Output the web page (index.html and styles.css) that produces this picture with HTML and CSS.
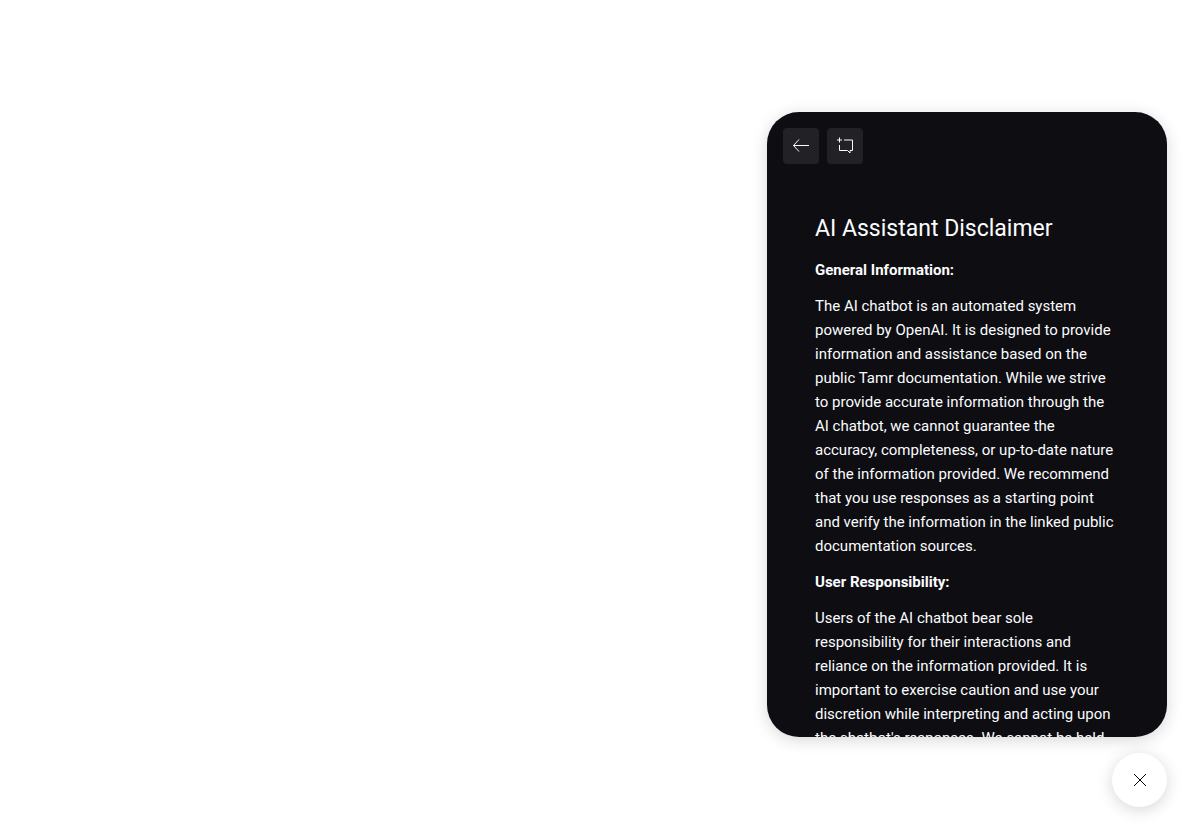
FILE: index.html
```html
<!DOCTYPE html>
<html lang="en">
<head>
<meta charset="utf-8">
<meta name="viewport" content="width=device-width, initial-scale=1">
<title>AI Assistant</title>
<link rel="stylesheet" href="styles.css">
</head>
<body class="page">
<section class="panel" aria-label="AI Assistant">
  <header class="toolbar">
    <button class="tool" type="button" aria-label="Back">
      <svg width="24" height="24" viewBox="0 0 24 24" fill="none" stroke="currentColor" aria-hidden="true"><path d="M4.500 11.500H20M10 5.500L4.500 11.500L10 17.500"/></svg>
    </button>
    <button class="tool" type="button" aria-label="New chat">
      <svg width="24" height="24" viewBox="0 0 24 24" fill="none" stroke="currentColor" aria-hidden="true"><path d="M6.500 3.500V8.500M4 6H9M11 6H19.500V16.500H17V19L14.500 16.500H6.500V11"/></svg>
    </button>
  </header>
  <article class="content">
    <h1 class="title">AI Assistant Disclaimer</h1>
    <h2 class="subtitle">General Information:</h2>
    <p class="text">The AI chatbot is an automated system<br>powered by OpenAI. It is designed to provide<br>information and assistance based on the<br>public Tamr documentation. While we strive<br>to provide accurate information through the<br>AI chatbot, we cannot guarantee the<br>accuracy, completeness, or up-to-date nature<br>of the information provided. We recommend<br>that you use responses as a starting point<br>and verify the information in the linked public<br>documentation sources.</p>
    <h2 class="subtitle">User Responsibility:</h2>
    <p class="text">Users of the AI chatbot bear sole<br>responsibility for their interactions and<br>reliance on the information provided. It is<br>important to exercise caution and use your<br>discretion while interpreting and acting upon<br>the chatbot's responses. We cannot be held</p>
  </article>
</section>
<button class="close" type="button" aria-label="Close chat">
  <svg width="24" height="24" viewBox="0 0 24 24" fill="none" stroke="currentColor" aria-hidden="true"><path d="M6 6L18 18M18 6L6 18"/></svg>
</button>
</body>
</html>
```
FILE: styles.css
```css
* { box-sizing: border-box; }
.page {
  margin: 0;
  height: 100vh;
  padding: 27px;
  display: flex;
  flex-direction: column;
  align-items: flex-end;
  justify-content: flex-end;
  gap: 16px;
  background: #fff;
  font-family: Roboto, "Liberation Sans", sans-serif;
}
.panel {
  display: flex;
  flex-direction: column;
  width: 400px;
  max-width: 100%;
  height: 75vh;
  border-radius: 32px;
  overflow: hidden;
  background: #0e0e12;
  color: #fbfcff;
  box-shadow: 0 3px 16px rgba(0, 0, 0, 0.16);
}
.toolbar {
  display: flex;
  gap: 8px;
  padding: 16px;
}
.tool {
  display: flex;
  padding: 6px;
  border: 0;
  border-radius: 4px;
  background: #212126;
  color: #fbfcff;
}
.content {
  flex: 1;
  min-height: 0;
  overflow: hidden;
  padding: 32px 40px 0 48px;
}
.title {
  margin: 0 0 12px;
  font-size: 23px;
  line-height: 34px;
  font-weight: 400;
}
.subtitle {
  margin: 0 0 12px;
  font-size: 15px;
  line-height: 24px;
  font-weight: 700;
}
.text {
  margin: 0 0 12px;
  font-size: 15px;
  line-height: 24px;
  white-space: nowrap;
}
.close {
  display: flex;
  align-items: center;
  justify-content: center;
  width: 55px;
  height: 54px;
  flex: none;
  padding: 0;
  border: 0;
  border-radius: 50%;
  background: #fff;
  color: #010205;
  box-shadow: 0 3px 16px rgba(0, 0, 0, 0.16);
}
```
